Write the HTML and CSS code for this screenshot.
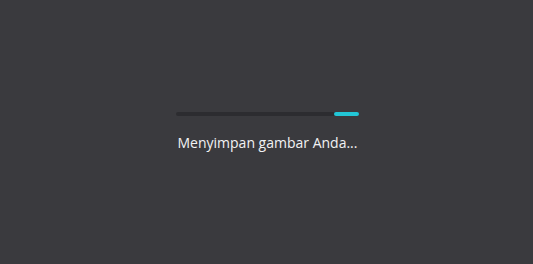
FILE: index.html
```html
<!DOCTYPE html>
<html lang="id">
<head>
<meta charset="utf-8">
<title>Menyimpan</title>
<link rel="stylesheet" href="styles.css">
</head>
<body>
<main class="screen">
  <div class="loader">
    <div class="track"><div class="fill"></div></div>
    <p class="label">Menyimpan gambar Anda...</p>
  </div>
</main>
</body>
</html>
```
FILE: styles.css
```css
html, body {
  margin: 0;
  padding: 0;
  height: 100%;
  background: #3a3a3e;
}
.screen {
  height: 100%;
  display: flex;
  align-items: center;
  justify-content: center;
}
.loader {
  display: flex;
  flex-direction: column;
  align-items: center;
  gap: 17px;
  padding-top: 1px;
  margin-left: 2px;
}
.track {
  width: 183px;
  height: 4px;
  border-radius: 2px;
  background: #2c2c30;
  display: flex;
  justify-content: flex-end;
}
.fill {
  width: 25px;
  height: 4px;
  border-radius: 2px;
  background: #22c6d6;
}
.label {
  margin: 0;
  font-family: "Open Sans", "Noto Sans", sans-serif;
  font-size: 14px;
  line-height: 20px;
  color: #f2f2f4;
}
```
